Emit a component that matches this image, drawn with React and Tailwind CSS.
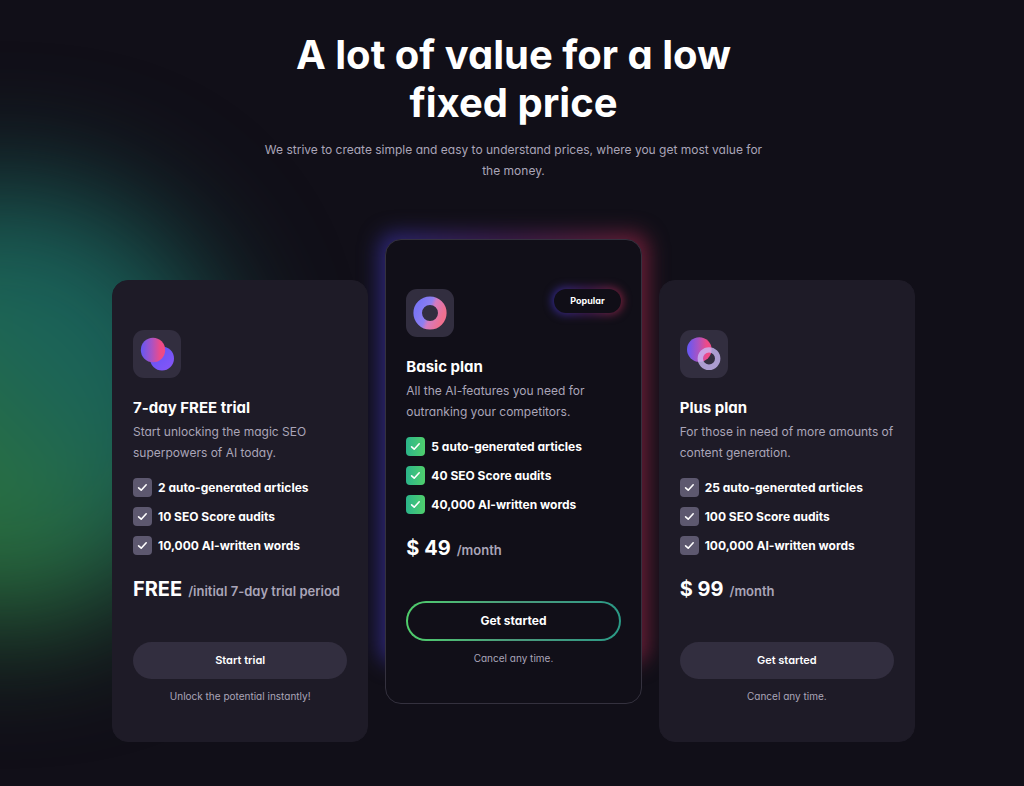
import React from "react";

const ICONS = {
  trial: (
    <svg viewBox="0 0 48 48" className="size-12" aria-hidden="true">
      <defs>
        <linearGradient id="trial-back" x1="0" y1="0" x2="1" y2="1">
          <stop offset="0" stopColor="#5b55f6" />
          <stop offset="1" stopColor="#8a55f7" />
        </linearGradient>
        <linearGradient id="trial-front" x1="0" y1="0" x2="1" y2="0">
          <stop offset="0" stopColor="#6358f5" />
          <stop offset="0.45" stopColor="#a953c4" />
          <stop offset="0.8" stopColor="#ee4a88" />
          <stop offset="1" stopColor="#f04b85" />
        </linearGradient>
      </defs>
      <circle cx="29" cy="28.5" r="12" fill="url(#trial-back)" />
      <circle cx="20" cy="20" r="12.2" fill="url(#trial-front)" />
    </svg>
  ),
  basic: (
    <svg viewBox="0 0 48 48" className="size-12" aria-hidden="true">
      <defs>
        <linearGradient id="basic-ring" x1="0" y1="0.3" x2="1" y2="0.7">
          <stop offset="0" stopColor="#7b76f5" />
          <stop offset="0.4" stopColor="#8f80f0" />
          <stop offset="0.56" stopColor="#d47bc0" />
          <stop offset="1" stopColor="#f0708f" />
        </linearGradient>
      </defs>
      <circle cx="24" cy="24" r="12.3" fill="none" stroke="url(#basic-ring)" strokeWidth="8.6" />
    </svg>
  ),
  plus: (
    <svg viewBox="0 0 48 48" className="size-12" aria-hidden="true">
      <defs>
        <linearGradient id="plus-front" x1="0" y1="0" x2="1" y2="0">
          <stop offset="0" stopColor="#6358f5" />
          <stop offset="0.45" stopColor="#a953c4" />
          <stop offset="0.8" stopColor="#ee4a88" />
          <stop offset="1" stopColor="#f04b85" />
        </linearGradient>
      </defs>
      <circle cx="19.3" cy="19.5" r="12.3" fill="url(#plus-front)" />
      <circle cx="29" cy="28.6" r="8.7" fill="none" stroke="#c9b8f5" strokeOpacity="0.8" strokeWidth="5.4" />
    </svg>
  ),
};

const PLANS = [
  {
    id: "trial",
    name: "7-day FREE trial",
    description: "Start unlocking the magic SEO superpowers of AI today.",
    features: ["2 auto-generated articles", "10 SEO Score audits", "10,000 AI-written words"],
    price: "FREE",
    period: "/initial 7-day trial period",
    action: "Start trial",
    note: "Unlock the potential instantly!",
  },
  {
    id: "basic",
    name: "Basic plan",
    description: "All the AI-features you need for outranking your competitors.",
    features: ["5 auto-generated articles", "40 SEO Score audits", "40,000 AI-written words"],
    price: "$ 49",
    period: "/month",
    action: "Get started",
    note: "Cancel any time.",
    popular: true,
  },
  {
    id: "plus",
    name: "Plus plan",
    description: "For those in need of more amounts of content generation.",
    features: ["25 auto-generated articles", "100 SEO Score audits", "100,000 AI-written words"],
    price: "$ 99",
    period: "/month",
    action: "Get started",
    note: "Cancel any time.",
  },
];

function Check({ popular }) {
  return (
    <span
      className={
        popular
          ? "flex size-[19px] shrink-0 items-center justify-center rounded bg-linear-to-r from-[#2bb58a] to-[#4fcf6b]"
          : "flex size-[19px] shrink-0 items-center justify-center rounded bg-[#5d586f]"
      }
    >
      <svg viewBox="0 0 19 19" className="size-[19px]" fill="none" stroke="#fff" strokeWidth="1.6" strokeLinecap="round" strokeLinejoin="round" aria-hidden="true">
        <path d="M5.6 9.8 8.2 12.2 13.2 6.8" />
      </svg>
    </span>
  );
}

function PopularBadge() {
  return (
    <span className="relative isolate">
      <span className="absolute -inset-0.5 -z-10 rounded-full bg-linear-to-r from-[#302a94] via-[#431b55] to-[#801f38] blur-[4px]" />
      <span className="block rounded-full bg-[#100e17] px-4 text-[9px] leading-6 font-bold text-white">Popular</span>
    </span>
  );
}

function PlanCard({ plan }) {
  const { popular } = plan;
  return (
    <article className={popular ? "relative" : "relative z-10 mt-[41px]"}>
      {popular && (
        <div className="absolute -inset-x-1.5 -top-1.5 bottom-10 rounded-2xl bg-linear-to-r from-[#2a2678] via-[#421d4e] to-[#6e1d34] blur-[10px]" />
      )}
      <div
        className={
          popular
            ? "relative flex flex-col rounded-2xl border border-[#34313e] bg-[#110f18] px-5 pt-[49px] pb-[37px]"
            : "relative flex flex-col rounded-2xl border border-[#1e1b27] bg-[#1e1b27] px-5 pt-[49px] pb-[37px]"
        }
      >
        <div className="flex items-start justify-between">
          <div className="size-12 rounded-[11px] bg-[#322e3f]">{ICONS[plan.id]}</div>
          {popular && <PopularBadge />}
        </div>
        <h2 className="mt-5 text-[15px] leading-5 font-bold text-white">{plan.name}</h2>
        <p className="mt-[3px] text-xs leading-[21px] text-[#aaa5b8]">{plan.description}</p>
        <ul className="mt-[15px] flex flex-col gap-[10px]">
          {plan.features.map((feature) => (
            <li key={feature} className="flex items-center gap-1.5 text-xs leading-[19px] font-bold text-white">
              <Check popular={popular} />
              {feature}
            </li>
          ))}
        </ul>
        <p className="mt-5 flex items-baseline gap-1.5 leading-7">
          <span className="text-xl leading-7 font-bold text-white">{plan.price}</span>
          <span className="text-[13px] font-semibold text-[#aaa5b8]">{plan.period}</span>
        </p>
        {popular ? (
          <button
            type="button"
            className="mt-[37px] flex h-10 rounded-full bg-linear-to-r from-[#4fce6b] via-[#4b9a7c] to-[#2a9a86] p-0.5 text-xs font-bold text-white"
          >
            <span className="flex h-full flex-1 items-center justify-center rounded-full bg-[#110f18]">{plan.action}</span>
          </button>
        ) : (
          <button type="button" className="mt-[37px] h-[37px] rounded-full bg-[#322e3f] text-[11px] font-semibold text-white">
            {plan.action}
          </button>
        )}
        <p className="mt-[9px] text-center text-[10px] leading-4 text-[#aaa5b8]">{plan.note}</p>
      </div>
    </article>
  );
}

export default function App() {
  return (
    <main className="relative isolate min-h-screen overflow-hidden bg-[#110f18] pb-11 pl-[3px] font-['Inter',sans-serif] [font-feature-settings:'cv11'_1]">
      <div className="absolute top-[185px] -left-[215px] -z-10 size-[440px] rounded-full bg-linear-to-tr from-[#2a7040] from-40% to-[#1a625a] to-60% blur-[62px]" />
      <header className="mx-auto flex max-w-[500px] flex-col pt-[31px] text-center">
        <h1 className="text-[40px] leading-12 font-bold text-white">A lot of value for a low fixed price</h1>
        <p className="mt-3 text-xs leading-[21px] text-[#aaa5b8]">
          We strive to create simple and easy to understand prices, where you get most value for the money.
        </p>
      </header>
      <section className="mx-auto mt-[58px] grid max-w-[803px] grid-cols-3 items-start gap-[17px]" aria-label="Plans">
        {PLANS.map((plan) => (
          <PlanCard key={plan.id} plan={plan} />
        ))}
      </section>
    </main>
  );
}
